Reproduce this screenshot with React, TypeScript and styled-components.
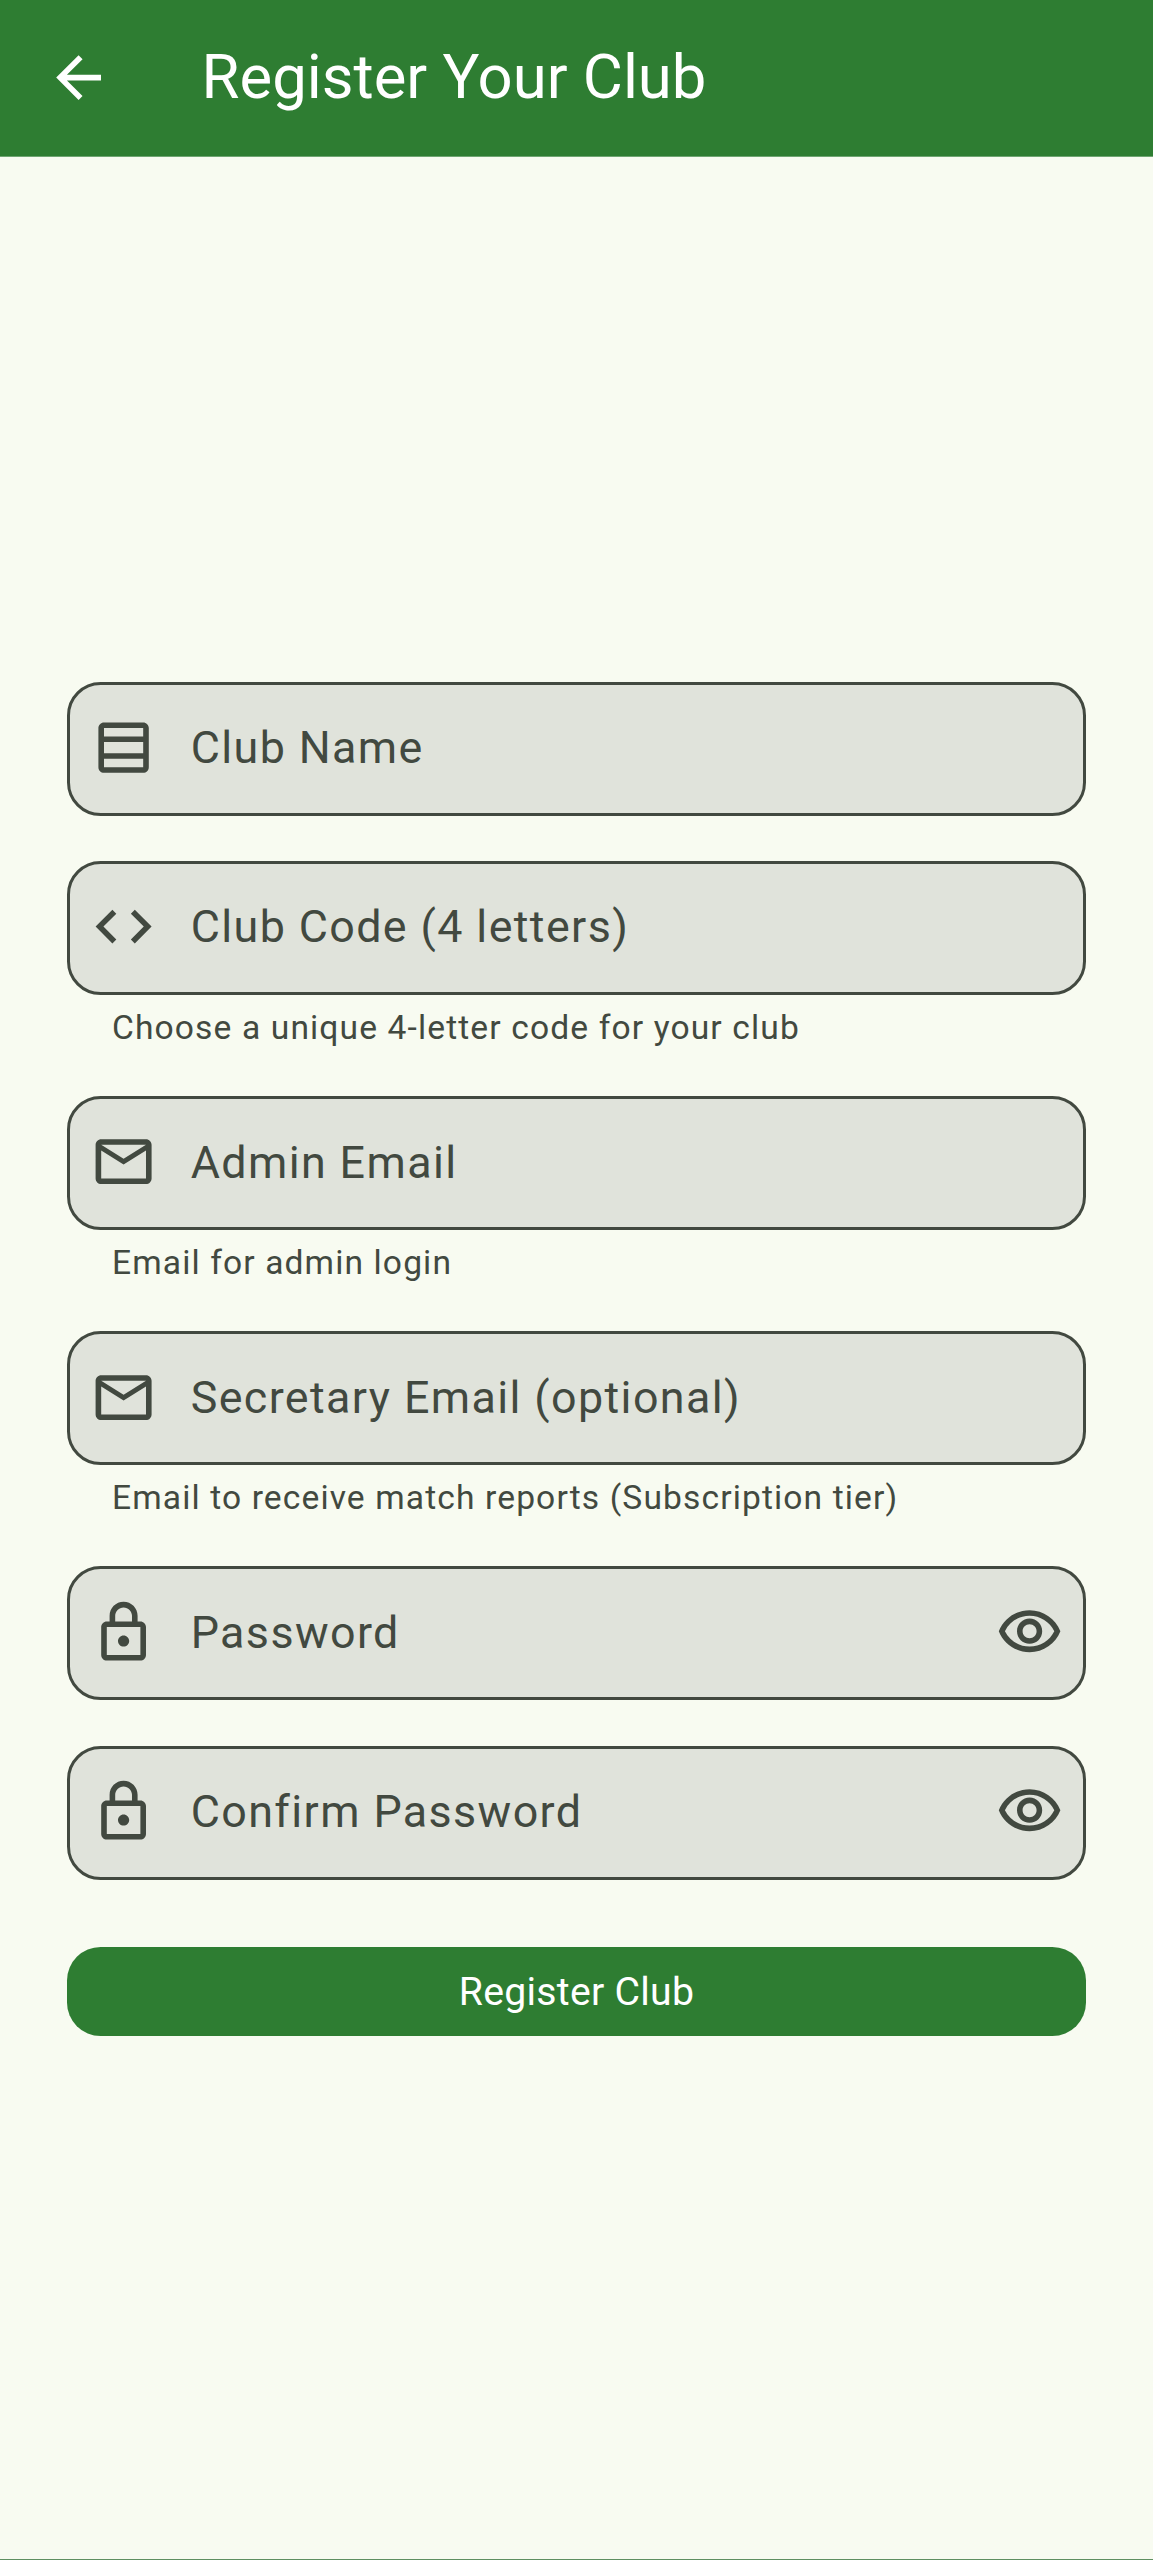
import React from "react";
import styled, { createGlobalStyle } from "styled-components";

const ICONS = {
  back: "M20 11H7.83l5.59-5.59L12 4l-8 8 8 8 1.41-1.41L7.83 13H20v-2z",
  rows: "M19 3H5c-1.1 0-2 .9-2 2v14c0 1.1.9 2 2 2h14c1.1 0 2-.9 2-2V5c0-1.1-.9-2-2-2zm0 2v3H5V5h14zm0 5v4H5v-4h14zM5 19v-3h14v3H5z",
  code: "M9.4 16.6L4.8 12l4.6-4.6L8 6l-6 6 6 6 1.4-1.4zm5.2 0l4.6-4.6-4.6-4.6L16 6l6 6-6 6-1.4-1.4z",
  mail: "M22 6c0-1.1-.9-2-2-2H4c-1.1 0-2 .9-2 2v12c0 1.1.9 2 2 2h16c1.1 0 2-.9 2-2V6zm-2 0l-8 5-8-5h16zm0 12H4V8l8 5 8-5v10z",
  lock: "M18 8h-1V6c0-2.76-2.24-5-5-5S7 3.24 7 6v2H6c-1.1 0-2 .9-2 2v10c0 1.1.9 2 2 2h12c1.1 0 2-.9 2-2V10c0-1.1-.9-2-2-2zM9 6c0-1.66 1.34-3 3-3s3 1.34 3 3v2H9V6zm9 14H6V10h12v10zm-6-3c1.1 0 2-.9 2-2s-.9-2-2-2-2 .9-2 2 .9 2 2 2z",
  eye: "M12 6c3.79 0 7.17 2.13 8.82 5.5C19.17 14.87 15.79 17 12 17s-7.17-2.13-8.82-5.5C4.83 8.13 8.21 6 12 6m0-2C7 4 2.73 7.11 1 11.5 2.73 15.89 7 19 12 19s9.27-3.11 11-7.5C21.27 7.11 17 4 12 4zm0 5c1.38 0 2.5 1.12 2.5 2.5S13.38 14 12 14s-2.5-1.12-2.5-2.5S10.62 9 12 9m0-2c-2.48 0-4.5 2.02-4.5 4.5S9.52 16 12 16s4.5-2.02 4.5-4.5S14.48 7 12 7z",
};

type IconName = keyof typeof ICONS;

const FIELDS: { icon: IconName; label: string; helper?: string; reveal?: boolean }[] = [
  { icon: "rows", label: "Club Name" },
  { icon: "code", label: "Club Code (4 letters)", helper: "Choose a unique 4-letter code for your club" },
  { icon: "mail", label: "Admin Email", helper: "Email for admin login" },
  { icon: "mail", label: "Secretary Email (optional)", helper: "Email to receive match reports (Subscription tier)" },
  { icon: "lock", label: "Password", reveal: true },
  { icon: "lock", label: "Confirm Password", reveal: true },
];

const Icon = ({ name }: { name: IconName }) => (
  <svg viewBox="0 0 24 24" width="67.2" height="67.2" fill="currentColor" aria-hidden="true">
    <path d={ICONS[name]} />
  </svg>
);

const App = () => {
  return (
    <>
      <GlobalStyle />
      <Page>
        <AppBar>
          <BackButton>
            <Icon name="back" />
          </BackButton>
          <Title>Register Your Club</Title>
        </AppBar>
        <Body>
          <Form>
            {FIELDS.map((f) => (
              <FieldGroup key={f.label}>
                <Field>
                  <FieldIcon>
                    <Icon name={f.icon} />
                  </FieldIcon>
                  <FieldLabel>{f.label}</FieldLabel>
                  {f.reveal && (
                    <TrailingIcon>
                      <Icon name="eye" />
                    </TrailingIcon>
                  )}
                </Field>
                {f.helper && <Helper>{f.helper}</Helper>}
              </FieldGroup>
            ))}
            <SubmitButton>Register Club</SubmitButton>
          </Form>
        </Body>
      </Page>
    </>
  );
};

export default App;

const GlobalStyle = createGlobalStyle`
  html, body {
    margin: 0;
    padding: 0;
    background: #f8fbf1;
  }
  * {
    box-sizing: border-box;
  }
`;

const Page = styled.div`
  height: 2560px;
  display: flex;
  flex-direction: column;
  background: #f8fbf1;
  border-bottom: 1px solid #5f8f62;
  font-family: Roboto, "Liberation Sans", sans-serif;
`;

const AppBar = styled.header`
  height: 157px;
  flex: none;
  display: flex;
  align-items: center;
  background: #2e7d32;
  border-bottom: 1px solid #6fa572;
  color: #ffffff;
`;

const BackButton = styled.div`
  width: 201.6px;
  padding-left: 44.8px;
  display: flex;
  align-items: center;
`;

const Title = styled.h1`
  margin: 0 0 2px;
  font-size: 61.6px;
  font-weight: 400;
  line-height: 78px;
`;

const Body = styled.main`
  flex: 1;
  display: flex;
  flex-direction: column;
  justify-content: center;
  padding: 2px 67.2px 0;
`;

const Form = styled.div`
  display: flex;
  flex-direction: column;
`;

const FieldGroup = styled.div`
  margin-bottom: 45.2px;

  &:nth-last-child(2) {
    margin-bottom: 67.2px;
  }
`;

const Field = styled.div`
  height: 134px;
  display: flex;
  align-items: center;
  padding: 0 20px 2px;
  border: 3px solid #424940;
  border-radius: 33.6px;
  background: #e0e3db;
  color: #424940;
`;

const FieldIcon = styled.span`
  display: flex;
  flex: none;
  width: 100.5px;
`;

const FieldLabel = styled.span`
  flex: 1;
  font-size: 44.8px;
  line-height: 67px;
  letter-spacing: 1.4px;
`;

const TrailingIcon = styled.span`
  display: flex;
  flex: none;
`;

const Helper = styled.div`
  padding: 11.2px 44.8px 0;
  font-size: 33.6px;
  line-height: 44.8px;
  letter-spacing: 1.12px;
  color: #424940;
`;

const SubmitButton = styled.button`
  height: 89.6px;
  padding: 0;
  border: none;
  border-radius: 33.6px;
  background: #2e7d32;
  color: #ffffff;
  font-family: inherit;
  font-size: 39.2px;
  font-weight: 400;
  letter-spacing: 0.28px;
`;
